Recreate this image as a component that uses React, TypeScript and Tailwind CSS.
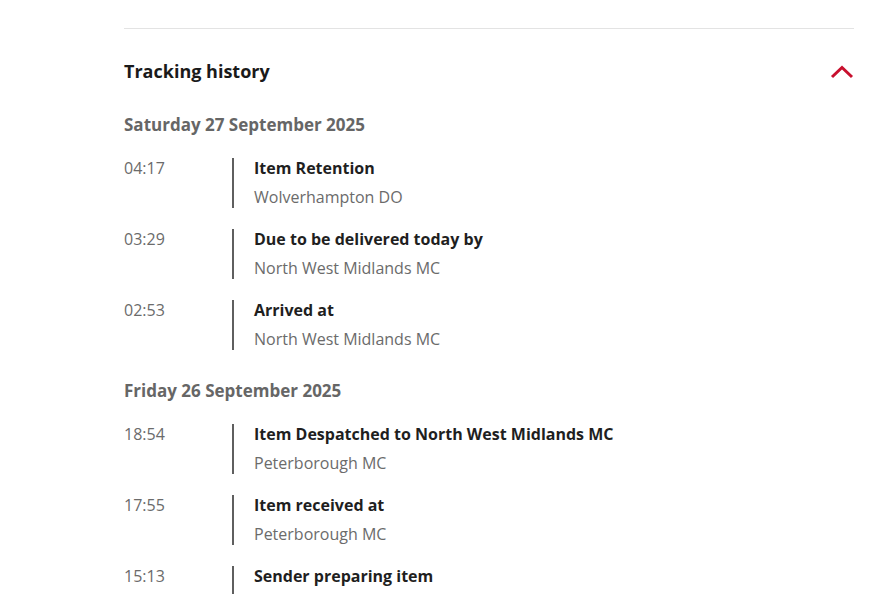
const groups = [
  {
    date: 'Saturday 27 September 2025',
    events: [
      { time: '04:17', title: 'Item Retention', place: 'Wolverhampton DO' },
      { time: '03:29', title: 'Due to be delivered today by', place: 'North West Midlands MC' },
      { time: '02:53', title: 'Arrived at', place: 'North West Midlands MC' },
    ],
  },
  {
    date: 'Friday 26 September 2025',
    events: [
      { time: '18:54', title: 'Item Despatched to North West Midlands MC', place: 'Peterborough MC' },
      { time: '17:55', title: 'Item received at', place: 'Peterborough MC' },
      { time: '15:13', title: 'Sender preparing item' },
    ],
  },
];

type Event = { time: string; title: string; place?: string };

function EventRow({ event }: { event: Event }) {
  return (
    <li className="flex mb-[21px]">
      <div className="w-[108px] shrink-0 text-[16px] leading-[20px] text-[#6b6b6b]">{event.time}</div>
      <div className="border-l-2 border-[#5f5f5f] pl-[20px]">
        <div className="text-[16px] leading-[20px] font-bold text-[#1f1f1f]">{event.title}</div>
        {event.place && (
          <div className="mt-[8px] text-[16px] leading-[22px] text-[#6b6b6b]">{event.place}</div>
        )}
        {!event.place && <div className="h-[8px]" />}
      </div>
    </li>
  );
}

export default function App() {
  return (
    <div className="min-h-screen bg-white pt-[28px] pl-[124px] pr-[41px] font-['Open_Sans',sans-serif]">
      <div className="border-t border-[#e3e3e3]">
        <div className="flex h-[85px] items-center justify-between">
          <h2 className="text-[18px] font-bold text-[#1a1a1a]">Tracking history</h2>
          <svg width="24" height="14" viewBox="0 0 24 14" aria-hidden>
            <path d="M2 12 L12 2.5 L22 12" fill="none" stroke="#c8102e" strokeWidth="3" />
          </svg>
        </div>
        {groups.map((g, i) => (
          <section key={g.date} className={i > 0 ? 'mt-[30px]' : ''}>
            <h3 className="text-[17px] leading-[22px] font-bold text-[#666] mb-[22px]">{g.date}</h3>
            <ul>
              {g.events.map((e) => (
                <EventRow key={e.time} event={e} />
              ))}
            </ul>
          </section>
        ))}
      </div>
    </div>
  );
}
